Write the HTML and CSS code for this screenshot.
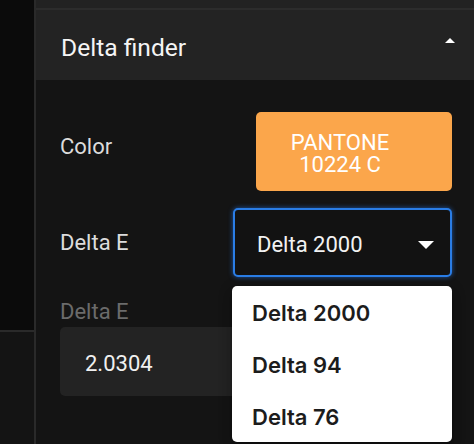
FILE: index.html
```html
<!DOCTYPE html>
<html lang="en">
<head>
<meta charset="utf-8">
<title>Delta finder</title>
<link rel="stylesheet" href="styles.css">
</head>
<body>
<div class="app">
  <aside class="rail">
    <div class="rail-top"></div>
  </aside>
  <main class="panel">
    <div class="prev"></div>
    <section class="accordion">
      <header class="acc-head">
        <h2 class="acc-title">Delta finder</h2>
        <svg class="acc-icon" viewBox="0 0 24 24" aria-hidden="true"><path d="M7 14l5-5 5 5z" fill="#ffffff"/></svg>
      </header>
      <div class="acc-body">
        <div class="row row-color">
          <span class="label">Color</span>
          <button class="swatch"><span class="swatch-line">PANTONE</span><span class="swatch-line">10224 C</span></button>
        </div>
        <div class="row row-select">
          <span class="label">Delta E</span>
          <div class="select">
            <span class="select-value">Delta 2000</span>
            <svg class="select-arrow" viewBox="0 0 16 8" aria-hidden="true"><path d="M0 0h16L8 8z" fill="#ffffff"/></svg>
            <ul class="menu">
              <li class="menu-item">Delta 2000</li>
              <li class="menu-item">Delta 94</li>
              <li class="menu-item">Delta 76</li>
            </ul>
          </div>
        </div>
        <div class="field">
          <span class="field-label">Delta E</span>
          <div class="input">2.0304</div>
        </div>
      </div>
    </section>
  </main>
</div>
</body>
</html>
```
FILE: styles.css
```css
html, body {
  margin: 0;
  padding: 0;
}

body {
  background: #141414;
  font-family: Roboto, "Liberation Sans", sans-serif;
  overflow: hidden;
}

.app {
  display: grid;
  grid-template-columns: 36px 1fr;
  height: 444px;
  overflow: hidden;
}

.rail {
  background: #141414;
  border-right: 2px solid #2a2a2a;
}

.rail-top {
  height: 330px;
  background: #0b0b0b;
  border-bottom: 2px solid #2a2a2a;
}

.panel {
  display: flex;
  flex-direction: column;
  background: #141414;
}

.prev {
  height: 8px;
  background: #222222;
  border-bottom: 2px solid #2c2c2c;
}

.acc-head {
  height: 70px;
  box-sizing: border-box;
  background: #232323;
  display: flex;
  justify-content: space-between;
  align-items: flex-start;
  padding: 0 12px 0 25px;
}

.acc-title {
  margin: 24px 0 0;
  font-size: 24.6px;
  font-weight: 400;
  line-height: 28px;
  color: #f5f5f5;
}

.acc-icon {
  width: 24px;
  height: 24px;
  margin-top: 19px;
}

.acc-body {
  padding: 32px 22px 0 24px;
}

.row {
  display: flex;
  justify-content: space-between;
  align-items: center;
}

.label {
  font-size: 22px;
  line-height: 26px;
  color: #dcdcdc;
}

.row-color .label {
  margin-bottom: 10px;
}

.swatch {
  width: 196px;
  height: 79px;
  border: 0;
  border-radius: 5px;
  background: #fba64b;
  color: #ffffff;
  font-family: Roboto, "Liberation Sans", sans-serif;
  font-size: 22px;
  padding: 4px 28px 0 0;
  text-align: center;
}

.swatch-line {
  display: block;
  line-height: 22px;
}

.row-select {
  margin-top: 17px;
}

.select {
  position: relative;
  width: 219px;
  height: 69px;
  box-sizing: border-box;
  border: 2px solid #2a7de6;
  border-radius: 5px;
  background: #121212;
  box-shadow: 0 0 5px rgba(40, 130, 255, 0.6);
  display: flex;
  align-items: center;
  justify-content: space-between;
  padding: 4px 16px 0 22px;
}

.select-value {
  font-size: 22px;
  line-height: 26px;
  color: #f2f2f2;
}

.select-arrow {
  width: 16px;
  height: 8px;
}

.menu {
  position: absolute;
  top: 76px;
  left: -3px;
  width: 220px;
  margin: 0;
  padding: 0;
  list-style: none;
  background: #ffffff;
  border-radius: 5px;
  box-shadow: 0 5px 5px -3px rgba(0, 0, 0, 0.2), 0 8px 10px 1px rgba(0, 0, 0, 0.14), 0 3px 14px 2px rgba(0, 0, 0, 0.12);
  z-index: 10;
}

.menu-item {
  height: 52px;
  box-sizing: border-box;
  padding: 2px 0 0 20px;
  line-height: 50px;
  font-family: Inter, "Noto Sans", sans-serif;
  font-weight: 600;
  font-size: 22px;
  color: #1c1c1c;
}

.field {
  margin-top: 22px;
}

.field-label {
  display: block;
  font-size: 22px;
  line-height: 26px;
  color: #6b6b6b;
}

.input {
  margin-top: 2px;
  height: 69px;
  box-sizing: border-box;
  background: #232323;
  border-radius: 5px;
  display: flex;
  align-items: center;
  padding: 4px 25px 0;
  font-size: 22px;
  line-height: 26px;
  color: #f0f0f0;
}
```
